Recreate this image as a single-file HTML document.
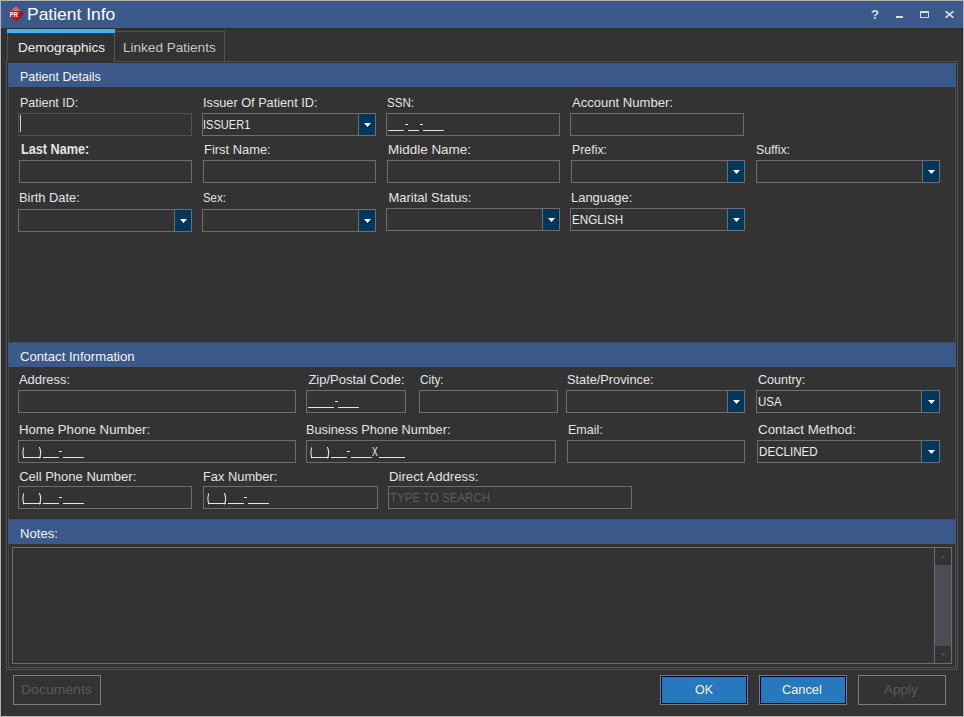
<!DOCTYPE html><html><head><meta charset="utf-8"><style>
html,body{margin:0;padding:0;}
body{width:964px;height:717px;position:relative;overflow:hidden;background:#333333;font-family:"Liberation Sans",sans-serif;}
.a{position:absolute;}
.t{white-space:nowrap;}
</style></head><body>
<div class="a" style="left:0px;top:0px;width:964px;height:717px;border:1px solid #b4b4b4;box-sizing:border-box;"></div>
<div class="a" style="left:1px;top:28px;width:1px;height:688px;background:#2b2b2b;"></div>
<div class="a" style="left:962px;top:28px;width:1px;height:688px;background:#2b2b2b;"></div>
<div class="a" style="left:1px;top:1px;width:962px;height:27px;background:#3b5a8b;"></div>
<div class="a" style="left:1px;top:28px;width:962px;height:1px;background:#2e2e2e;"></div>
<svg class="a" style="left:8px;top:6px" width="16" height="16" viewBox="0 0 16 16">
<polygon points="8,0 16,8 8,16 0,8" fill="#c3161c"/>
<polygon points="8,0 13,5 3,5" fill="#cc6b6b"/>
<polygon points="13,5 16,8 8,16 11,8" fill="#a21418"/>
<text x="1.8" y="11.1" font-family="Liberation Sans" font-weight="bold" font-size="6.8" fill="#ffffff" textLength="8.2" lengthAdjust="spacingAndGlyphs">PR</text>
</svg>
<div id="t0" class="a t" style="left:26.78px;top:6px;font-size:17px;line-height:17px;color:#ffffff;font-weight:normal;transform:scaleX(1.0271);transform-origin:0 0;">Patient Info</div>
<div id="t1" class="a t" style="left:870.54px;top:9px;font-size:12px;line-height:12px;color:#dcdcdc;font-weight:bold;transform:scaleX(1.0833);transform-origin:0 0;">?</div>
<div class="a" style="left:896px;top:16px;width:7px;height:2px;background:#dcdcdc;"></div>
<div class="a" style="left:920px;top:11px;width:9px;height:7px;box-sizing:border-box;border:1px solid #dcdcdc;border-top-width:2px"></div>
<svg class="a" style="left:945px;top:11px" width="9" height="7"><path d="M0.5,0 L8.5,7 M8.5,0 L0.5,7" stroke="#dcdcdc" stroke-width="1.6"/></svg>
<div class="a" style="left:7px;top:33px;width:1px;height:28px;background:#525252;"></div>
<div class="a" style="left:114px;top:33px;width:1px;height:29px;background:#525252;"></div>
<div class="a" style="left:115px;top:31px;width:110px;height:1px;background:#525252;"></div>
<div class="a" style="left:224px;top:31px;width:1px;height:31px;background:#525252;"></div>
<div class="a" style="left:7px;top:29px;width:108px;height:4px;background:#3bb6fc;"></div>
<div id="t2" class="a t" style="left:18.00px;top:41px;font-size:13.5px;line-height:13.5px;color:#f0f0f0;font-weight:normal;">Demographics</div>
<div id="t3" class="a t" style="left:123.00px;top:41px;font-size:13.5px;line-height:13.5px;color:#c8c8c8;font-weight:normal;transform:scaleX(1.0043);transform-origin:0 0;">Linked Patients</div>
<div class="a" style="left:6px;top:61px;width:1px;height:609px;background:#525252;"></div>
<div class="a" style="left:957px;top:61px;width:1px;height:609px;background:#525252;"></div>
<div class="a" style="left:114px;top:61px;width:844px;height:1px;background:#525252;"></div>
<div class="a" style="left:6px;top:669px;width:952px;height:1px;background:#525252;"></div>
<div class="a" style="left:8px;top:62px;width:947px;height:1px;background:#2f2f2f;"></div>
<div class="a" style="left:8px;top:63px;width:1px;height:605px;background:#4a4646;"></div>
<div class="a" style="left:7px;top:62px;width:1px;height:607px;background:#2f2f2f;"></div>
<div class="a" style="left:955px;top:63px;width:1px;height:605px;background:#544848;"></div>
<div class="a" style="left:8px;top:667px;width:948px;height:1px;background:#544848;"></div>
<div class="a" style="left:8px;top:342px;width:948px;height:1px;background:#544848;"></div>
<div class="a" style="left:8px;top:519px;width:948px;height:1px;background:#544848;"></div>
<div class="a" style="left:8px;top:63px;width:948px;height:24px;background:#3b5a8b;"></div>
<div id="t4" class="a t" style="left:20.21px;top:70px;font-size:13px;line-height:13px;color:#f4f4f4;font-weight:normal;transform:scaleX(0.9631);transform-origin:0 0;">Patient Details</div>
<div class="a" style="left:8px;top:343px;width:948px;height:24px;background:#3b5a8b;"></div>
<div id="t5" class="a t" style="left:20.20px;top:350px;font-size:13px;line-height:13px;color:#f4f4f4;font-weight:normal;transform:scaleX(1.0106);transform-origin:0 0;">Contact Information</div>
<div class="a" style="left:8px;top:520px;width:948px;height:24px;background:#3b5a8b;"></div>
<div id="t6" class="a t" style="left:20.20px;top:527px;font-size:13px;line-height:13px;color:#f4f4f4;font-weight:normal;transform:scaleX(1.0081);transform-origin:0 0;">Notes:</div>
<div id="t7" class="a t" style="left:19.63px;top:96px;font-size:13px;line-height:13px;color:#e4e4e4;font-weight:normal;transform:scaleX(0.9583);transform-origin:0 0;">Patient ID:</div>
<div class="a" style="left:18px;top:113px;width:174px;height:23px;border:1px solid #505050;box-sizing:border-box;"></div>
<div class="a" style="left:20px;top:115px;width:1px;height:17px;background:#d4d4d4;"></div>
<div id="t8" class="a t" style="left:203.01px;top:96px;font-size:13px;line-height:13px;color:#e4e4e4;font-weight:normal;transform:scaleX(0.9784);transform-origin:0 0;">Issuer Of Patient ID:</div>
<div class="a" style="left:202px;top:113px;width:174px;height:23px;border:1px solid #6e6e6e;box-sizing:border-box;"></div>
<div class="a" style="left:358px;top:113px;width:1px;height:23px;background:#6e6e6e;"></div>
<div class="a" style="left:359px;top:114px;width:16px;height:21px;background:#00375a;"></div>
<svg class="a" style="left:364.0px;top:123px" width="7" height="4"><polygon points="0,0 7,0 3.5,4" fill="#ffffff"/></svg>
<div id="t9" class="a t" style="left:203.15px;top:118px;font-size:13px;line-height:13px;color:#ececec;font-weight:normal;transform:scaleX(0.8509);transform-origin:0 0;">ISSUER1</div>
<div id="t10" class="a t" style="left:387.24px;top:96px;font-size:13px;line-height:13px;color:#e4e4e4;font-weight:normal;transform:scaleX(0.8897);transform-origin:0 0;">SSN:</div>
<div class="a" style="left:386px;top:113px;width:174px;height:23px;border:1px solid #6e6e6e;box-sizing:border-box;"></div>
<div class="a" style="left:388px;top:130px;width:16px;height:1px;background:#e6e6e6;"></div>
<div class="a" style="left:404.5px;top:124px;width:3px;height:1px;background:#e6e6e6;"></div>
<div class="a" style="left:408px;top:130px;width:11px;height:1px;background:#e6e6e6;"></div>
<div class="a" style="left:419.5px;top:124px;width:3px;height:1px;background:#e6e6e6;"></div>
<div class="a" style="left:423px;top:130px;width:21px;height:1px;background:#e6e6e6;"></div>
<div id="t11" class="a t" style="left:571.80px;top:96px;font-size:13px;line-height:13px;color:#e4e4e4;font-weight:normal;transform:scaleX(1.0050);transform-origin:0 0;">Account Number:</div>
<div class="a" style="left:570px;top:113px;width:174px;height:23px;border:1px solid #6e6e6e;box-sizing:border-box;"></div>
<div id="t12" class="a t" style="left:20.81px;top:142px;font-size:14px;line-height:14px;color:#e4e4e4;font-weight:bold;transform:scaleX(0.9053);transform-origin:0 0;">Last Name:</div>
<div class="a" style="left:19px;top:160px;width:173px;height:23px;border:1px solid #6e6e6e;box-sizing:border-box;"></div>
<div id="t13" class="a t" style="left:204.40px;top:143px;font-size:13px;line-height:13px;color:#e4e4e4;font-weight:normal;transform:scaleX(0.9924);transform-origin:0 0;">First Name:</div>
<div class="a" style="left:203px;top:160px;width:173px;height:23px;border:1px solid #6e6e6e;box-sizing:border-box;"></div>
<div id="t14" class="a t" style="left:388.39px;top:143px;font-size:13px;line-height:13px;color:#e4e4e4;font-weight:normal;transform:scaleX(1.0354);transform-origin:0 0;">Middle Name:</div>
<div class="a" style="left:387px;top:160px;width:173px;height:23px;border:1px solid #6e6e6e;box-sizing:border-box;"></div>
<div id="t15" class="a t" style="left:572.22px;top:143px;font-size:13px;line-height:13px;color:#e4e4e4;font-weight:normal;transform:scaleX(0.9500);transform-origin:0 0;">Prefix:</div>
<div class="a" style="left:571px;top:160px;width:174px;height:23px;border:1px solid #6e6e6e;box-sizing:border-box;"></div>
<div class="a" style="left:727px;top:160px;width:1px;height:23px;background:#6e6e6e;"></div>
<div class="a" style="left:728px;top:161px;width:16px;height:21px;background:#00375a;"></div>
<svg class="a" style="left:733.0px;top:170px" width="7" height="4"><polygon points="0,0 7,0 3.5,4" fill="#ffffff"/></svg>
<div id="t16" class="a t" style="left:756.22px;top:143px;font-size:13px;line-height:13px;color:#e4e4e4;font-weight:normal;transform:scaleX(0.9457);transform-origin:0 0;">Suffix:</div>
<div class="a" style="left:756px;top:160px;width:184px;height:23px;border:1px solid #6e6e6e;box-sizing:border-box;"></div>
<div class="a" style="left:922px;top:160px;width:1px;height:23px;background:#6e6e6e;"></div>
<div class="a" style="left:923px;top:161px;width:16px;height:21px;background:#00375a;"></div>
<svg class="a" style="left:928.0px;top:170px" width="7" height="4"><polygon points="0,0 7,0 3.5,4" fill="#ffffff"/></svg>
<div id="t17" class="a t" style="left:18.81px;top:191px;font-size:13px;line-height:13px;color:#e4e4e4;font-weight:normal;transform:scaleX(0.9900);transform-origin:0 0;">Birth Date:</div>
<div class="a" style="left:18px;top:209px;width:174px;height:23px;border:1px solid #6e6e6e;box-sizing:border-box;"></div>
<div class="a" style="left:174px;top:209px;width:1px;height:23px;background:#6e6e6e;"></div>
<div class="a" style="left:175px;top:210px;width:16px;height:21px;background:#00375a;"></div>
<svg class="a" style="left:180.0px;top:219px" width="7" height="4"><polygon points="0,0 7,0 3.5,4" fill="#ffffff"/></svg>
<div id="t18" class="a t" style="left:203.38px;top:191px;font-size:13px;line-height:13px;color:#e4e4e4;font-weight:normal;transform:scaleX(0.8769);transform-origin:0 0;">Sex:</div>
<div class="a" style="left:202px;top:209px;width:174px;height:23px;border:1px solid #6e6e6e;box-sizing:border-box;"></div>
<div class="a" style="left:358px;top:209px;width:1px;height:23px;background:#6e6e6e;"></div>
<div class="a" style="left:359px;top:210px;width:16px;height:21px;background:#00375a;"></div>
<svg class="a" style="left:364.0px;top:219px" width="7" height="4"><polygon points="0,0 7,0 3.5,4" fill="#ffffff"/></svg>
<div id="t19" class="a t" style="left:388.40px;top:191px;font-size:13px;line-height:13px;color:#e4e4e4;font-weight:normal;">Marital Status:</div>
<div class="a" style="left:386px;top:208px;width:174px;height:23px;border:1px solid #6e6e6e;box-sizing:border-box;"></div>
<div class="a" style="left:542px;top:208px;width:1px;height:23px;background:#6e6e6e;"></div>
<div class="a" style="left:543px;top:209px;width:16px;height:21px;background:#00375a;"></div>
<svg class="a" style="left:548.0px;top:218px" width="7" height="4"><polygon points="0,0 7,0 3.5,4" fill="#ffffff"/></svg>
<div id="t20" class="a t" style="left:570.80px;top:191px;font-size:13px;line-height:13px;color:#e4e4e4;font-weight:normal;transform:scaleX(0.9967);transform-origin:0 0;">Language:</div>
<div class="a" style="left:570px;top:208px;width:175px;height:23px;border:1px solid #6e6e6e;box-sizing:border-box;"></div>
<div class="a" style="left:727px;top:208px;width:1px;height:23px;background:#6e6e6e;"></div>
<div class="a" style="left:728px;top:209px;width:16px;height:21px;background:#00375a;"></div>
<svg class="a" style="left:733.0px;top:218px" width="7" height="4"><polygon points="0,0 7,0 3.5,4" fill="#ffffff"/></svg>
<div id="t21" class="a t" style="left:572.24px;top:213px;font-size:13px;line-height:13px;color:#ececec;font-weight:normal;transform:scaleX(0.8964);transform-origin:0 0;">ENGLISH</div>
<div id="t22" class="a t" style="left:19.00px;top:373px;font-size:13px;line-height:13px;color:#e4e4e4;font-weight:normal;transform:scaleX(0.9941);transform-origin:0 0;">Address:</div>
<div class="a" style="left:18px;top:390px;width:278px;height:23px;border:1px solid #6e6e6e;box-sizing:border-box;"></div>
<div id="t23" class="a t" style="left:308.40px;top:373px;font-size:13px;line-height:13px;color:#e4e4e4;font-weight:normal;">Zip/Postal Code:</div>
<div class="a" style="left:306px;top:390px;width:100px;height:23px;border:1px solid #6e6e6e;box-sizing:border-box;"></div>
<div class="a" style="left:308px;top:407px;width:26px;height:1px;background:#e6e6e6;"></div>
<div class="a" style="left:334.5px;top:401px;width:3px;height:1px;background:#e6e6e6;"></div>
<div class="a" style="left:338px;top:407px;width:21px;height:1px;background:#e6e6e6;"></div>
<div id="t24" class="a t" style="left:420.43px;top:373px;font-size:13px;line-height:13px;color:#e4e4e4;font-weight:normal;transform:scaleX(0.9080);transform-origin:0 0;">City:</div>
<div class="a" style="left:419px;top:390px;width:139px;height:23px;border:1px solid #6e6e6e;box-sizing:border-box;"></div>
<div id="t25" class="a t" style="left:566.81px;top:373px;font-size:13px;line-height:13px;color:#e4e4e4;font-weight:normal;transform:scaleX(0.9816);transform-origin:0 0;">State/Province:</div>
<div class="a" style="left:566px;top:390px;width:179px;height:23px;border:1px solid #6e6e6e;box-sizing:border-box;"></div>
<div class="a" style="left:727px;top:390px;width:1px;height:23px;background:#6e6e6e;"></div>
<div class="a" style="left:728px;top:391px;width:16px;height:21px;background:#00375a;"></div>
<svg class="a" style="left:733.0px;top:400px" width="7" height="4"><polygon points="0,0 7,0 3.5,4" fill="#ffffff"/></svg>
<div id="t26" class="a t" style="left:757.80px;top:373px;font-size:13px;line-height:13px;color:#e4e4e4;font-weight:normal;transform:scaleX(0.9633);transform-origin:0 0;">Country:</div>
<div class="a" style="left:756px;top:390px;width:184px;height:23px;border:1px solid #6e6e6e;box-sizing:border-box;"></div>
<div class="a" style="left:921px;top:390px;width:1px;height:23px;background:#6e6e6e;"></div>
<div class="a" style="left:922px;top:391px;width:17px;height:21px;background:#00375a;"></div>
<svg class="a" style="left:927.5px;top:400px" width="7" height="4"><polygon points="0,0 7,0 3.5,4" fill="#ffffff"/></svg>
<div id="t27" class="a t" style="left:758.19px;top:395px;font-size:13px;line-height:13px;color:#ececec;font-weight:normal;transform:scaleX(0.8815);transform-origin:0 0;">USA</div>
<div id="t28" class="a t" style="left:19.19px;top:423px;font-size:13px;line-height:13px;color:#e4e4e4;font-weight:normal;transform:scaleX(1.0141);transform-origin:0 0;">Home Phone Number:</div>
<div class="a" style="left:18px;top:440px;width:278px;height:23px;border:1px solid #6e6e6e;box-sizing:border-box;"></div>
<svg class="a" style="left:20.7px;top:447px" width="3.5" height="12"><path d="M3.2,0 Q0.6,5.5 3.2,11.5" stroke="#e6e6e6" stroke-width="1.1" fill="none"/></svg>
<div class="a" style="left:23px;top:457px;width:17.5px;height:1px;background:#e6e6e6;"></div>
<svg class="a" style="left:39px;top:447px" width="3.6999999999999993" height="12"><path d="M0.3,0 Q3.099999999999999,5.5 0.3,11.5" stroke="#e6e6e6" stroke-width="1.1" fill="none"/></svg>
<div class="a" style="left:42.7px;top:457px;width:16.099999999999998px;height:1px;background:#e6e6e6;"></div>
<div class="a" style="left:59.3px;top:451px;width:3.0px;height:1px;background:#e6e6e6;"></div>
<div class="a" style="left:62.7px;top:457px;width:21.299999999999997px;height:1px;background:#e6e6e6;"></div>
<div id="t29" class="a t" style="left:306.01px;top:423px;font-size:13px;line-height:13px;color:#e4e4e4;font-weight:normal;transform:scaleX(0.9801);transform-origin:0 0;">Business Phone Number:</div>
<div class="a" style="left:306px;top:440px;width:250px;height:23px;border:1px solid #6e6e6e;box-sizing:border-box;"></div>
<svg class="a" style="left:308.7px;top:447px" width="3.5" height="12"><path d="M3.2,0 Q0.6,5.5 3.2,11.5" stroke="#e6e6e6" stroke-width="1.1" fill="none"/></svg>
<div class="a" style="left:311px;top:457px;width:17.5px;height:1px;background:#e6e6e6;"></div>
<svg class="a" style="left:327px;top:447px" width="3.6999999999999993" height="12"><path d="M0.3,0 Q3.099999999999999,5.5 0.3,11.5" stroke="#e6e6e6" stroke-width="1.1" fill="none"/></svg>
<div class="a" style="left:330.7px;top:457px;width:16.099999999999998px;height:1px;background:#e6e6e6;"></div>
<div class="a" style="left:347.3px;top:451px;width:3.0px;height:1px;background:#e6e6e6;"></div>
<div class="a" style="left:350.7px;top:457px;width:21.299999999999997px;height:1px;background:#e6e6e6;"></div>
<div class="a" style="left:379.3px;top:457px;width:25.700000000000003px;height:1px;background:#e6e6e6;"></div>
<div id="t30" class="a t" style="left:372.32px;top:445px;font-size:13px;line-height:13px;color:#ececec;font-weight:normal;transform:scaleX(0.6583);transform-origin:0 0;">X</div>
<div id="t31" class="a t" style="left:568.02px;top:423px;font-size:13px;line-height:13px;color:#e4e4e4;font-weight:normal;transform:scaleX(0.9657);transform-origin:0 0;">Email:</div>
<div class="a" style="left:567px;top:440px;width:178px;height:23px;border:1px solid #6e6e6e;box-sizing:border-box;"></div>
<div id="t32" class="a t" style="left:758.19px;top:423px;font-size:13px;line-height:13px;color:#e4e4e4;font-weight:normal;transform:scaleX(1.0266);transform-origin:0 0;">Contact Method:</div>
<div class="a" style="left:757px;top:440px;width:183px;height:23px;border:1px solid #6e6e6e;box-sizing:border-box;"></div>
<div class="a" style="left:921px;top:440px;width:1px;height:23px;background:#6e6e6e;"></div>
<div class="a" style="left:922px;top:441px;width:17px;height:21px;background:#00375a;"></div>
<svg class="a" style="left:927.5px;top:450px" width="7" height="4"><polygon points="0,0 7,0 3.5,4" fill="#ffffff"/></svg>
<div id="t33" class="a t" style="left:758.67px;top:445px;font-size:13px;line-height:13px;color:#ececec;font-weight:normal;transform:scaleX(0.8938);transform-origin:0 0;">DECLINED</div>
<div id="t34" class="a t" style="left:19.20px;top:470px;font-size:13px;line-height:13px;color:#e4e4e4;font-weight:normal;">Cell Phone Number:</div>
<div class="a" style="left:18px;top:486px;width:174px;height:23px;border:1px solid #6e6e6e;box-sizing:border-box;"></div>
<svg class="a" style="left:20.7px;top:493px" width="3.5" height="12"><path d="M3.2,0 Q0.6,5.5 3.2,11.5" stroke="#e6e6e6" stroke-width="1.1" fill="none"/></svg>
<div class="a" style="left:23px;top:503px;width:17.5px;height:1px;background:#e6e6e6;"></div>
<svg class="a" style="left:39px;top:493px" width="3.6999999999999993" height="12"><path d="M0.3,0 Q3.099999999999999,5.5 0.3,11.5" stroke="#e6e6e6" stroke-width="1.1" fill="none"/></svg>
<div class="a" style="left:42.7px;top:503px;width:16.099999999999998px;height:1px;background:#e6e6e6;"></div>
<div class="a" style="left:59.3px;top:497px;width:3.0px;height:1px;background:#e6e6e6;"></div>
<div class="a" style="left:62.7px;top:503px;width:21.299999999999997px;height:1px;background:#e6e6e6;"></div>
<div id="t35" class="a t" style="left:203.40px;top:470px;font-size:13px;line-height:13px;color:#e4e4e4;font-weight:normal;transform:scaleX(0.9878);transform-origin:0 0;">Fax Number:</div>
<div class="a" style="left:203px;top:486px;width:175px;height:23px;border:1px solid #6e6e6e;box-sizing:border-box;"></div>
<svg class="a" style="left:205.7px;top:493px" width="3.5" height="12"><path d="M3.2,0 Q0.6,5.5 3.2,11.5" stroke="#e6e6e6" stroke-width="1.1" fill="none"/></svg>
<div class="a" style="left:208px;top:503px;width:17.5px;height:1px;background:#e6e6e6;"></div>
<svg class="a" style="left:224px;top:493px" width="3.6999999999999993" height="12"><path d="M0.3,0 Q3.099999999999999,5.5 0.3,11.5" stroke="#e6e6e6" stroke-width="1.1" fill="none"/></svg>
<div class="a" style="left:227.7px;top:503px;width:16.099999999999998px;height:1px;background:#e6e6e6;"></div>
<div class="a" style="left:244.3px;top:497px;width:3.0px;height:1px;background:#e6e6e6;"></div>
<div class="a" style="left:247.7px;top:503px;width:21.299999999999997px;height:1px;background:#e6e6e6;"></div>
<div id="t36" class="a t" style="left:389.19px;top:470px;font-size:13px;line-height:13px;color:#e4e4e4;font-weight:normal;transform:scaleX(1.0149);transform-origin:0 0;">Direct Address:</div>
<div class="a" style="left:388px;top:486px;width:244px;height:23px;border:1px solid #6e6e6e;box-sizing:border-box;"></div>
<div id="t37" class="a t" style="left:390.49px;top:491px;font-size:13px;line-height:13px;color:#5c5c5c;font-weight:normal;transform:scaleX(0.8856);transform-origin:0 0;">TYPE TO SEARCH</div>
<div class="a" style="left:12px;top:547px;width:940px;height:117px;border:1px solid #6e6e6e;box-sizing:border-box;"></div>
<div class="a" style="left:934px;top:548px;width:1px;height:115px;background:#6e6e6e;"></div>
<div class="a" style="left:935px;top:565px;width:16px;height:81px;background:#4e4b55;"></div>
<svg class="a" style="left:940px;top:555px" width="6" height="3"><polygon points="0,3 6,3 3,0" fill="#4a4a4a"/></svg>
<svg class="a" style="left:940px;top:653px" width="6" height="3"><polygon points="0,0 6,0 3,3" fill="#4a4a4a"/></svg>
<div class="a" style="left:13px;top:675px;width:88px;height:30px;border:1px solid #7c7c7c;box-sizing:border-box;"></div>
<div id="t38" class="a t" style="left:20.51px;top:683px;font-size:13px;line-height:13px;color:#5a5a5a;font-weight:normal;transform:scaleX(1.0766);transform-origin:0 0;">Documents</div>
<div class="a" style="left:660px;top:675px;width:88px;height:30px;border:1px solid #7c7c7c;box-sizing:border-box;"></div>
<div class="a" style="left:661px;top:676px;width:86px;height:28px;background:#2779bd;border:1px solid #03033f;box-sizing:border-box;"></div>
<div id="t39" class="a t" style="left:694.61px;top:683px;font-size:13px;line-height:13px;color:#f4f4f4;font-weight:normal;transform:scaleX(0.9579);transform-origin:0 0;">OK</div>
<div class="a" style="left:759px;top:675px;width:88px;height:30px;border:1px solid #7c7c7c;box-sizing:border-box;"></div>
<div class="a" style="left:760px;top:676px;width:86px;height:28px;background:#2779bd;border:1px solid #03033f;box-sizing:border-box;"></div>
<div id="t40" class="a t" style="left:782.21px;top:683px;font-size:13px;line-height:13px;color:#f4f4f4;font-weight:normal;transform:scaleX(0.9825);transform-origin:0 0;">Cancel</div>
<div class="a" style="left:858px;top:675px;width:88px;height:30px;border:1px solid #7c7c7c;box-sizing:border-box;"></div>
<div id="t41" class="a t" style="left:884.41px;top:683px;font-size:13px;line-height:13px;color:#5a5a5a;font-weight:normal;transform:scaleX(1.0455);transform-origin:0 0;">Apply</div>
</body></html>
